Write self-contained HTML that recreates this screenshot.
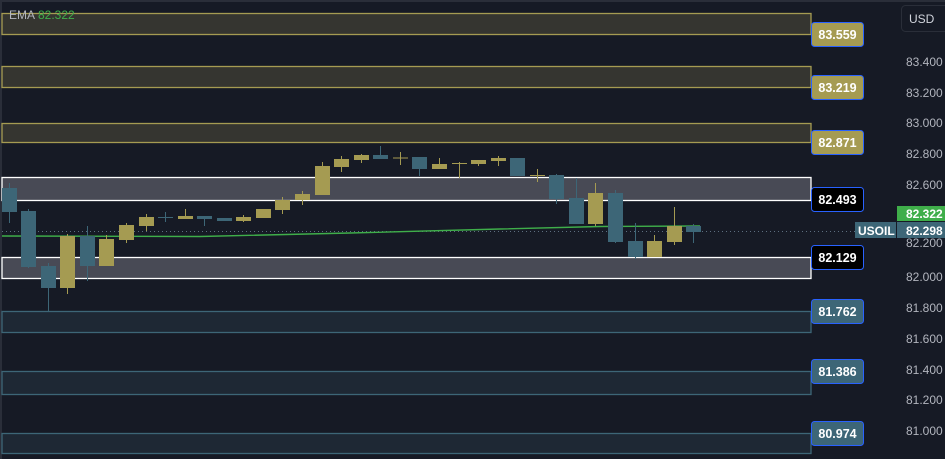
<!DOCTYPE html><html><head><style>
body{margin:0;background:#161a25;width:945px;height:459px;overflow:hidden;font-family:"Liberation Sans",sans-serif}
svg{display:block}
</style></head><body>
<svg width="945" height="459" xmlns="http://www.w3.org/2000/svg" font-family="Liberation Sans, sans-serif">
<rect width="945" height="459" fill="#161a25"/>
<rect x="0" y="0" width="2" height="459" fill="#2a2e39"/>
<rect x="0" y="0" width="945" height="2" fill="#2a2e39"/>
<!-- zones -->
<g stroke-width="1.3">
<rect x="2" y="13.5" width="809" height="21" fill="#353530" stroke="#a59b52"/>
<rect x="2" y="66.5" width="809" height="21" fill="#353530" stroke="#a59b52"/>
<rect x="2" y="123.5" width="809" height="19" fill="#353530" stroke="#a59b52"/>
<rect x="2" y="177.5" width="809" height="23" fill="#484a55" stroke="#ffffff"/>
<rect x="2" y="257.5" width="809" height="21" fill="#484a55" stroke="#ffffff"/>
<rect x="2" y="311.5" width="809" height="21" fill="#1e2834" stroke="#3d6677"/>
<rect x="2" y="371.5" width="809" height="23" fill="#1e2834" stroke="#3d6677"/>
<rect x="2" y="433.5" width="809" height="20" fill="#1e2834" stroke="#3d6677"/>
</g>
<!-- dotted price line -->
<line x1="2" y1="231.5" x2="855" y2="231.5" stroke="#5d6f80" stroke-dasharray="1,3"/>
<!-- EMA -->
<path d="M2 236 L200 236.5 L350 233 L500 229 L600 226.5 L700 226" fill="none" stroke="#3fae4a" stroke-width="1.4"/>
<!-- candles -->
<g stroke-width="1">
<g fill="#3d6677" stroke="#3d6677">
<line x1="9.5" y1="183" x2="9.5" y2="223"/><rect x="2" y="188" width="15" height="24" stroke="none"/>
<line x1="28.5" y1="209" x2="28.5" y2="268"/><rect x="21" y="211" width="15" height="56" stroke="none"/>
<line x1="48.5" y1="263" x2="48.5" y2="311"/><rect x="41" y="266" width="15" height="22" stroke="none"/>
<line x1="87.5" y1="226" x2="87.5" y2="281"/><rect x="80" y="236" width="15" height="30" stroke="none"/>
<line x1="158" y1="217.5" x2="173" y2="217.5"/><line x1="165.5" y1="212" x2="165.5" y2="222"/>
<line x1="204.5" y1="216" x2="204.5" y2="226"/><rect x="197" y="216" width="15" height="3" stroke="none"/>
<rect x="217" y="218" width="15" height="3" stroke="none"/>
<line x1="380.5" y1="146" x2="380.5" y2="158"/><rect x="373" y="155" width="15" height="4" stroke="none"/>
<line x1="419.5" y1="157" x2="419.5" y2="176"/><rect x="412" y="157" width="15" height="12" stroke="none"/>
<rect x="510" y="158" width="15" height="18" stroke="none"/>
<line x1="556.5" y1="174" x2="556.5" y2="204"/><rect x="549" y="175" width="15" height="24" stroke="none"/>
<line x1="576.5" y1="178" x2="576.5" y2="224"/><rect x="569" y="198" width="15" height="26" stroke="none"/>
<line x1="615.5" y1="190" x2="615.5" y2="243"/><rect x="608" y="193" width="15" height="49" stroke="none"/>
<line x1="635.5" y1="223" x2="635.5" y2="259"/><rect x="628" y="241" width="15" height="16" stroke="none"/>
<line x1="693.5" y1="224" x2="693.5" y2="243"/><rect x="686" y="226" width="15" height="6" stroke="none"/>
</g>
<g fill="#a59b52" stroke="#a59b52">
<line x1="67.5" y1="234" x2="67.5" y2="294"/><rect x="60" y="236" width="15" height="52" stroke="none"/>
<line x1="106.5" y1="235" x2="106.5" y2="266"/><rect x="99" y="239" width="15" height="27" stroke="none"/>
<line x1="126.5" y1="223" x2="126.5" y2="243"/><rect x="119" y="225" width="15" height="15" stroke="none"/>
<line x1="146.5" y1="214" x2="146.5" y2="231"/><rect x="139" y="217" width="15" height="9" stroke="none"/>
<line x1="185.5" y1="209" x2="185.5" y2="219"/><rect x="178" y="216" width="15" height="3" stroke="none"/>
<line x1="243.5" y1="215" x2="243.5" y2="222"/><rect x="236" y="217" width="15" height="4" stroke="none"/>
<rect x="256" y="209" width="15" height="9" stroke="none"/>
<line x1="282.5" y1="197" x2="282.5" y2="214"/><rect x="275" y="200" width="15" height="10" stroke="none"/>
<line x1="302.5" y1="191" x2="302.5" y2="205"/><rect x="295" y="194" width="15" height="6" stroke="none"/>
<line x1="322.5" y1="162" x2="322.5" y2="195"/><rect x="315" y="166" width="15" height="29" stroke="none"/>
<line x1="341.5" y1="156" x2="341.5" y2="172"/><rect x="334" y="159" width="15" height="8" stroke="none"/>
<line x1="361.5" y1="154" x2="361.5" y2="163"/><rect x="354" y="155" width="15" height="5" stroke="none"/>
<line x1="393" y1="158" x2="408" y2="158"/><line x1="400.5" y1="152" x2="400.5" y2="165"/>
<line x1="439.5" y1="158" x2="439.5" y2="165"/><rect x="432" y="164" width="15" height="5" stroke="none"/>
<line x1="452" y1="163.5" x2="467" y2="163.5"/><line x1="459.5" y1="162" x2="459.5" y2="178"/>
<line x1="478.5" y1="160" x2="478.5" y2="166"/><rect x="471" y="160" width="15" height="4" stroke="none"/>
<line x1="498.5" y1="156" x2="498.5" y2="166"/><rect x="491" y="158" width="15" height="3" stroke="none"/>
<line x1="530" y1="175.5" x2="545" y2="175.5"/><line x1="537.5" y1="169" x2="537.5" y2="182"/>
<line x1="595.5" y1="183" x2="595.5" y2="226"/><rect x="588" y="193" width="15" height="31" stroke="none"/>
<line x1="654.5" y1="235" x2="654.5" y2="257"/><rect x="647" y="241" width="15" height="16" stroke="none"/>
<line x1="674.5" y1="207" x2="674.5" y2="245"/><rect x="667" y="226" width="15" height="16" stroke="none"/>
</g>
</g>
<!-- EMA legend -->
<text x="9" y="19" font-size="12" fill="#b2b5be">EMA</text>
<text x="38" y="19" font-size="12" fill="#3fae4a">82.322</text>
<!-- zone labels -->
<g font-size="12.5" font-weight="bold" text-anchor="middle">
<rect x="811.5" y="22.5" width="52" height="24" rx="3" fill="#a59b52" stroke="#2962ff"/><text x="837.5" y="39" fill="#fff">83.559</text>
<rect x="811.5" y="75.5" width="52" height="24" rx="3" fill="#a59b52" stroke="#2962ff"/><text x="837.5" y="92" fill="#fff">83.219</text>
<rect x="811.5" y="130.5" width="52" height="24" rx="3" fill="#a59b52" stroke="#2962ff"/><text x="837.5" y="147" fill="#fff">82.871</text>
<rect x="811.5" y="187.5" width="52" height="24" rx="3" fill="#000" stroke="#2962ff"/><text x="837.5" y="204" fill="#fff">82.493</text>
<rect x="811.5" y="245.5" width="52" height="24" rx="3" fill="#000" stroke="#2962ff"/><text x="837.5" y="262" fill="#fff">82.129</text>
<rect x="811.5" y="299.5" width="52" height="24" rx="3" fill="#3d6677" stroke="#2962ff"/><text x="837.5" y="316" fill="#fff">81.762</text>
<rect x="811.5" y="359.5" width="52" height="24" rx="3" fill="#3d6677" stroke="#2962ff"/><text x="837.5" y="376" fill="#fff">81.386</text>
<rect x="811.5" y="421.5" width="52" height="24" rx="3" fill="#3d6677" stroke="#2962ff"/><text x="837.5" y="438" fill="#fff">80.974</text>
</g>
<!-- price axis -->
<rect x="901.5" y="5.5" width="50" height="26" rx="4" fill="#161a25" stroke="#2a2e39"/>
<text x="909" y="23" font-size="12" fill="#d1d4dc">USD</text>
<g font-size="12" fill="#b2b5be">
<text x="906" y="66">83.400</text>
<text x="906" y="97">83.200</text>
<text x="906" y="127">83.000</text>
<text x="906" y="158">82.800</text>
<text x="906" y="189">82.600</text>
<text x="906" y="247">82.200</text>
<text x="906" y="281">82.000</text>
<text x="906" y="312">81.800</text>
<text x="906" y="343">81.600</text>
<text x="906" y="374">81.400</text>
<text x="906" y="404">81.200</text>
<text x="906" y="435">81.000</text>
</g>
<rect x="897" y="206" width="48" height="15" fill="#3fae4a"/>
<text x="906" y="218" font-size="12" font-weight="bold" fill="#fff">82.322</text>
<rect x="897" y="222" width="48" height="16" fill="#3d6677"/>
<text x="906" y="235" font-size="12" font-weight="bold" fill="#fff">82.298</text>
<rect x="855" y="222" width="41" height="16" fill="#3d6677"/>
<text x="858" y="235" font-size="12" font-weight="bold" fill="#fff">USOIL</text>
</svg>
</body></html>
